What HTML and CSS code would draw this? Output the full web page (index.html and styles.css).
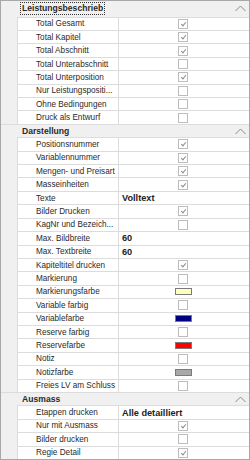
FILE: index.html
```html
<!DOCTYPE html>
<html lang="de">
<head>
    <meta charset="UTF-8">
    <title>Druckoptionen</title>
    <link rel="stylesheet" href="styles.css">
</head>
<body>
    <div class="grid">
        <div class="cat first">
            <div class="cat-head"><span class="cat-title focus">Leistungsbeschrieb</span><svg class="chev" width="11" height="7" viewBox="0 0 11 7"><polyline points="0.5,6 5.5,1 10.5,6"/></svg></div>
            <div class="rows">
                <div class="row"><div class="name">Total Gesamt</div><div class="val"><span class="chk on"></span></div></div>
                <div class="row"><div class="name">Total Kapitel</div><div class="val"><span class="chk on"></span></div></div>
                <div class="row"><div class="name">Total Abschnitt</div><div class="val"><span class="chk on"></span></div></div>
                <div class="row"><div class="name">Total Unterabschnitt</div><div class="val"><span class="chk"></span></div></div>
                <div class="row"><div class="name">Total Unterposition</div><div class="val"><span class="chk on"></span></div></div>
                <div class="row"><div class="name">Nur Leistungspositi...</div><div class="val"><span class="chk"></span></div></div>
                <div class="row"><div class="name">Ohne Bedingungen</div><div class="val"><span class="chk"></span></div></div>
                <div class="row"><div class="name">Druck als Entwurf</div><div class="val"><span class="chk"></span></div></div>
            </div>
        </div>
        <div class="cat">
            <div class="cat-head"><span class="cat-title">Darstellung</span><svg class="chev" width="11" height="7" viewBox="0 0 11 7"><polyline points="0.5,6 5.5,1 10.5,6"/></svg></div>
            <div class="rows">
                <div class="row"><div class="name">Positionsnummer</div><div class="val"><span class="chk on"></span></div></div>
                <div class="row"><div class="name">Variablennummer</div><div class="val"><span class="chk on"></span></div></div>
                <div class="row"><div class="name">Mengen- und Preisart</div><div class="val"><span class="chk on"></span></div></div>
                <div class="row"><div class="name">Masseinheiten</div><div class="val"><span class="chk on"></span></div></div>
                <div class="row"><div class="name">Texte</div><div class="val text">Volltext</div></div>
                <div class="row"><div class="name">Bilder Drucken</div><div class="val"><span class="chk on"></span></div></div>
                <div class="row"><div class="name">KagNr und Bezeich...</div><div class="val"><span class="chk"></span></div></div>
                <div class="row"><div class="name">Max. Bildbreite</div><div class="val text">60</div></div>
                <div class="row"><div class="name">Max. Textbreite</div><div class="val text">60</div></div>
                <div class="row"><div class="name">Kapiteltitel drucken</div><div class="val"><span class="chk on"></span></div></div>
                <div class="row"><div class="name">Markierung</div><div class="val"><span class="chk"></span></div></div>
                <div class="row"><div class="name">Markierungsfarbe</div><div class="val"><span class="swatch yellow"></span></div></div>
                <div class="row"><div class="name">Variable farbig</div><div class="val"><span class="chk"></span></div></div>
                <div class="row"><div class="name">Variablefarbe</div><div class="val"><span class="swatch navy"></span></div></div>
                <div class="row"><div class="name">Reserve farbig</div><div class="val"><span class="chk"></span></div></div>
                <div class="row"><div class="name">Reservefarbe</div><div class="val"><span class="swatch red"></span></div></div>
                <div class="row"><div class="name">Notiz</div><div class="val"><span class="chk"></span></div></div>
                <div class="row"><div class="name">Notizfarbe</div><div class="val"><span class="swatch grey"></span></div></div>
                <div class="row"><div class="name">Freies LV am Schluss</div><div class="val"><span class="chk"></span></div></div>
            </div>
        </div>
        <div class="cat">
            <div class="cat-head"><span class="cat-title">Ausmass</span><svg class="chev" width="11" height="7" viewBox="0 0 11 7"><polyline points="0.5,6 5.5,1 10.5,6"/></svg></div>
            <div class="rows">
                <div class="row"><div class="name">Etappen drucken</div><div class="val text">Alle detailliert</div></div>
                <div class="row"><div class="name">Nur mit Ausmass</div><div class="val"><span class="chk on"></span></div></div>
                <div class="row"><div class="name">Bilder drucken</div><div class="val"><span class="chk"></span></div></div>
                <div class="row"><div class="name">Regie Detail</div><div class="val"><span class="chk on"></span></div></div>
            </div>
        </div>
    </div>
</body>
</html>
```

FILE: styles.css
```css
body {
    margin: 0;
    font-family: 'Liberation Sans', Arial, sans-serif;
    font-size: 8.2px;
    color: #2a2a2a;
    background: #fff;
}
.grid {
    width: 250px;
    height: 460px;
    box-sizing: border-box;
    border: 1px solid #a8a8a8;
    background: #f0f0f0;
    overflow: hidden;
}
.cat-head {
    height: 13.42px;
    box-sizing: border-box;
    border-top: 1px solid #dcdcdc;
    display: flex;
    align-items: center;
    justify-content: space-between;
    padding: 0 3px 0 19px;
}
.first .cat-head {
    height: 15.6px;
    border-top: none;
}
.cat-title {
    font-weight: bold;
    font-size: 8.6px;
    padding: 0 1px;
    border: 1px solid transparent;
    line-height: 11px;
}
.cat-title.focus {
    border: 1px dotted #333;
}
.chev {
    fill: none;
    stroke: #8a8a8a;
    stroke-width: 1;
}
.rows {
    margin-left: 16px;
    border-left: 1px solid #dcdcdc;
    background: #fff;
}
.row {
    display: grid;
    grid-template-columns: 101px 1fr;
    height: 13.42px;
    box-sizing: border-box;
    border-top: 1px solid #dcdcdc;
}
.name {
    padding-left: 18px;
    border-right: 1px solid #dcdcdc;
    white-space: nowrap;
    overflow: hidden;
    display: flex;
    align-items: center;
}
.val {
    display: flex;
    align-items: center;
    justify-content: center;
    padding-right: 2px;
}
.val.text {
    justify-content: flex-start;
    padding-left: 3px;
    font-weight: bold;
    font-size: 9.2px;
    color: #222;
}
.chk {
    width: 10px;
    height: 10px;
    box-sizing: border-box;
    border: 1px solid #bcbcbc;
    background: #fff;
    position: relative;
}
.chk.on::after {
    content: "";
    position: absolute;
    left: 3px;
    top: 1px;
    width: 2px;
    height: 4px;
    border: solid #8c8c8c;
    border-width: 0 1px 1px 0;
    transform: rotate(40deg);
}
.swatch {
    width: 17px;
    height: 7px;
    box-sizing: border-box;
    border: 1px solid #7a7a7a;
}
.yellow { background: #ffffc0; }
.navy { background: #000080; }
.red { background: #ff0000; }
.grey { background: #a8a8a8; }
```
